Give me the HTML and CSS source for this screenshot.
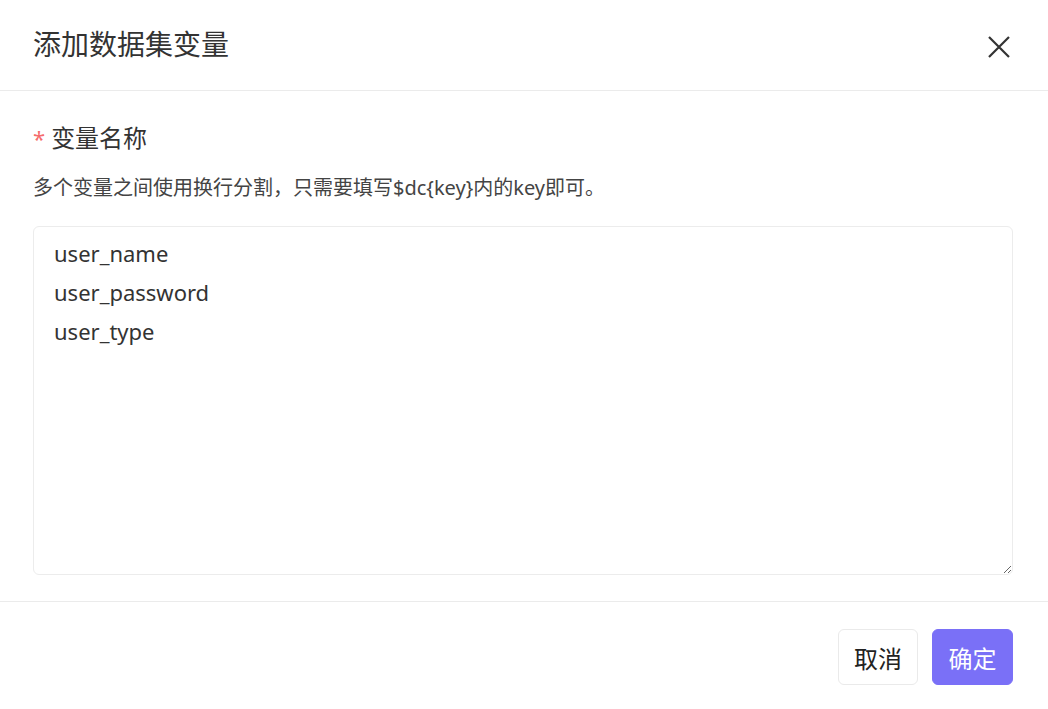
FILE: index.html
```html
<!DOCTYPE html>
<html lang="zh-CN">
<head>
    <meta charset="UTF-8">
    <title>添加数据集变量</title>
    <link rel="stylesheet" href="styles.css">
</head>
<body>
    <div class="dialog">
        <div class="dialog-header">
            <h2 class="dialog-title">添加数据集变量</h2>
            <button class="close-btn" aria-label="关闭">
                <svg width="22" height="22" viewBox="0 0 22 22"><path d="M1 1 L21 21 M21 1 L1 21" stroke="#333" stroke-width="2.2" fill="none"/></svg>
            </button>
        </div>

        <div class="dialog-body">
            <label class="field-label" for="varNames"><span class="required">*</span>变量名称</label>
            <p class="field-tip">多个变量之间使用换行分割，只需要填写$dc{key}内的key即可。</p>
            <textarea id="varNames" class="field-input">user_name
user_password
user_type</textarea>
        </div>

        <div class="dialog-footer">
            <button class="btn btn-default">取消</button>
            <button class="btn btn-primary">确定</button>
        </div>
    </div>
</body>
</html>
```

FILE: styles.css
```css
* { box-sizing: border-box; }
html, body { margin: 0; padding: 0; background: #fff; }
body { font-family: "Noto Sans", "Noto Sans CJK SC", sans-serif; color: #333; }
.dialog { display: flex; flex-direction: column; height: 709px; }
.dialog-header { height: 91px; display: flex; align-items: center; justify-content: space-between; padding: 0 38px 0 33px; border-bottom: 1px solid #ebebeb; }
.dialog-title { margin: 0; font-size: 28px; font-weight: 400; line-height: 36px; color: #333; margin-top: -2px; }
.close-btn { background: none; border: none; padding: 0; width: 22px; height: 22px; cursor: pointer; display: flex; margin-top: 4px; }
.dialog-body { padding: 31px 35px 26px 33px; display: flex; flex-direction: column; }
.field-label { font-size: 24px; line-height: 32px; color: #333; display: flex; align-items: center; }
.required { color: #f56c6c; font-size: 22px; margin-right: 6px; }
.field-tip { margin: 20px 0 0; font-size: 20px; line-height: 28px; color: #444; }
.field-input { margin-top: 24px; height: 349px; width: 100%; border: 1px solid #ececec; border-radius: 6px; padding: 7px 20px; font-family: "Noto Sans", "Noto Sans CJK SC", sans-serif; font-size: 22px; line-height: 39px; color: #333; resize: vertical; outline: none; }
.dialog-footer { flex: 1; border-top: 1px solid #ebebeb; display: flex; justify-content: flex-end; align-items: flex-start; gap: 14px; padding: 27px 35px 0 0; }
.btn { height: 56px; padding: 0 14px; font-size: 24px; border-radius: 6px; font-family: "Noto Sans CJK SC", sans-serif; cursor: pointer; }
.btn-default { width: 80px; background: #fff; color: #222; border: 1px solid #eaeaea; }
.btn-primary { width: 81px; background: #7a70f7; color: #fff; border: 1px solid #7a70f7; }
```
